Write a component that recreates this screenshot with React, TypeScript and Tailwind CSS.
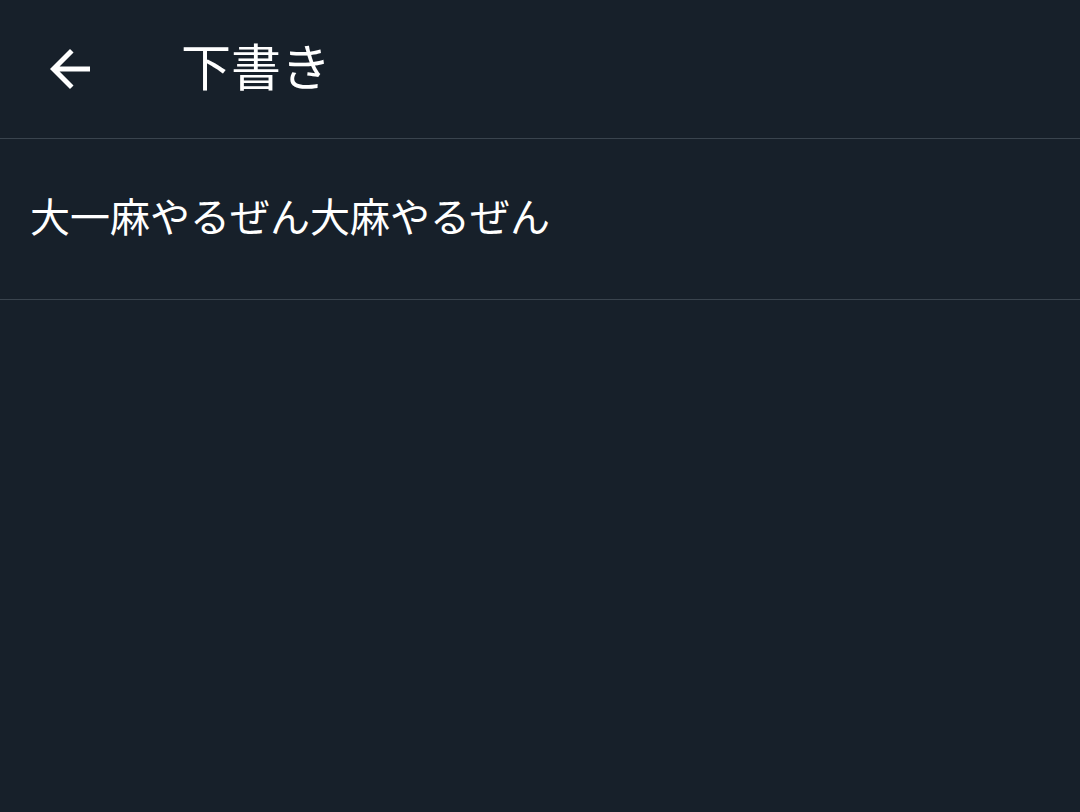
import React from "react";

export default function App() {
  return (
    <div
      className="w-[1080px] h-[812px] bg-[#17202a] text-white overflow-hidden"
      style={{ fontFamily: '"Noto Sans CJK JP", "Noto Sans", sans-serif' }}
    >
      <header className="h-[139px] flex items-center border-b border-[#3a444e]">
        <div className="w-[60px] h-[60px] ml-[40px] flex items-center justify-center">
          <svg viewBox="0 0 24 24" width="60" height="60" fill="white">
            <path d="M20 11H7.83l5.59-5.59L12 4l-8 8 8 8 1.41-1.41L7.83 13H20v-2z" />
          </svg>
        </div>
        <h1 className="ml-[81px] mt-[-10px] text-[50px] leading-none font-normal">下書き</h1>
      </header>
      <div className="h-[161px] flex items-center px-[30px] border-b border-[#3a444e]">
        <p className="mt-[-8px] text-[40px] leading-none">大一麻やるぜん大麻やるぜん</p>
      </div>
    </div>
  );
}
